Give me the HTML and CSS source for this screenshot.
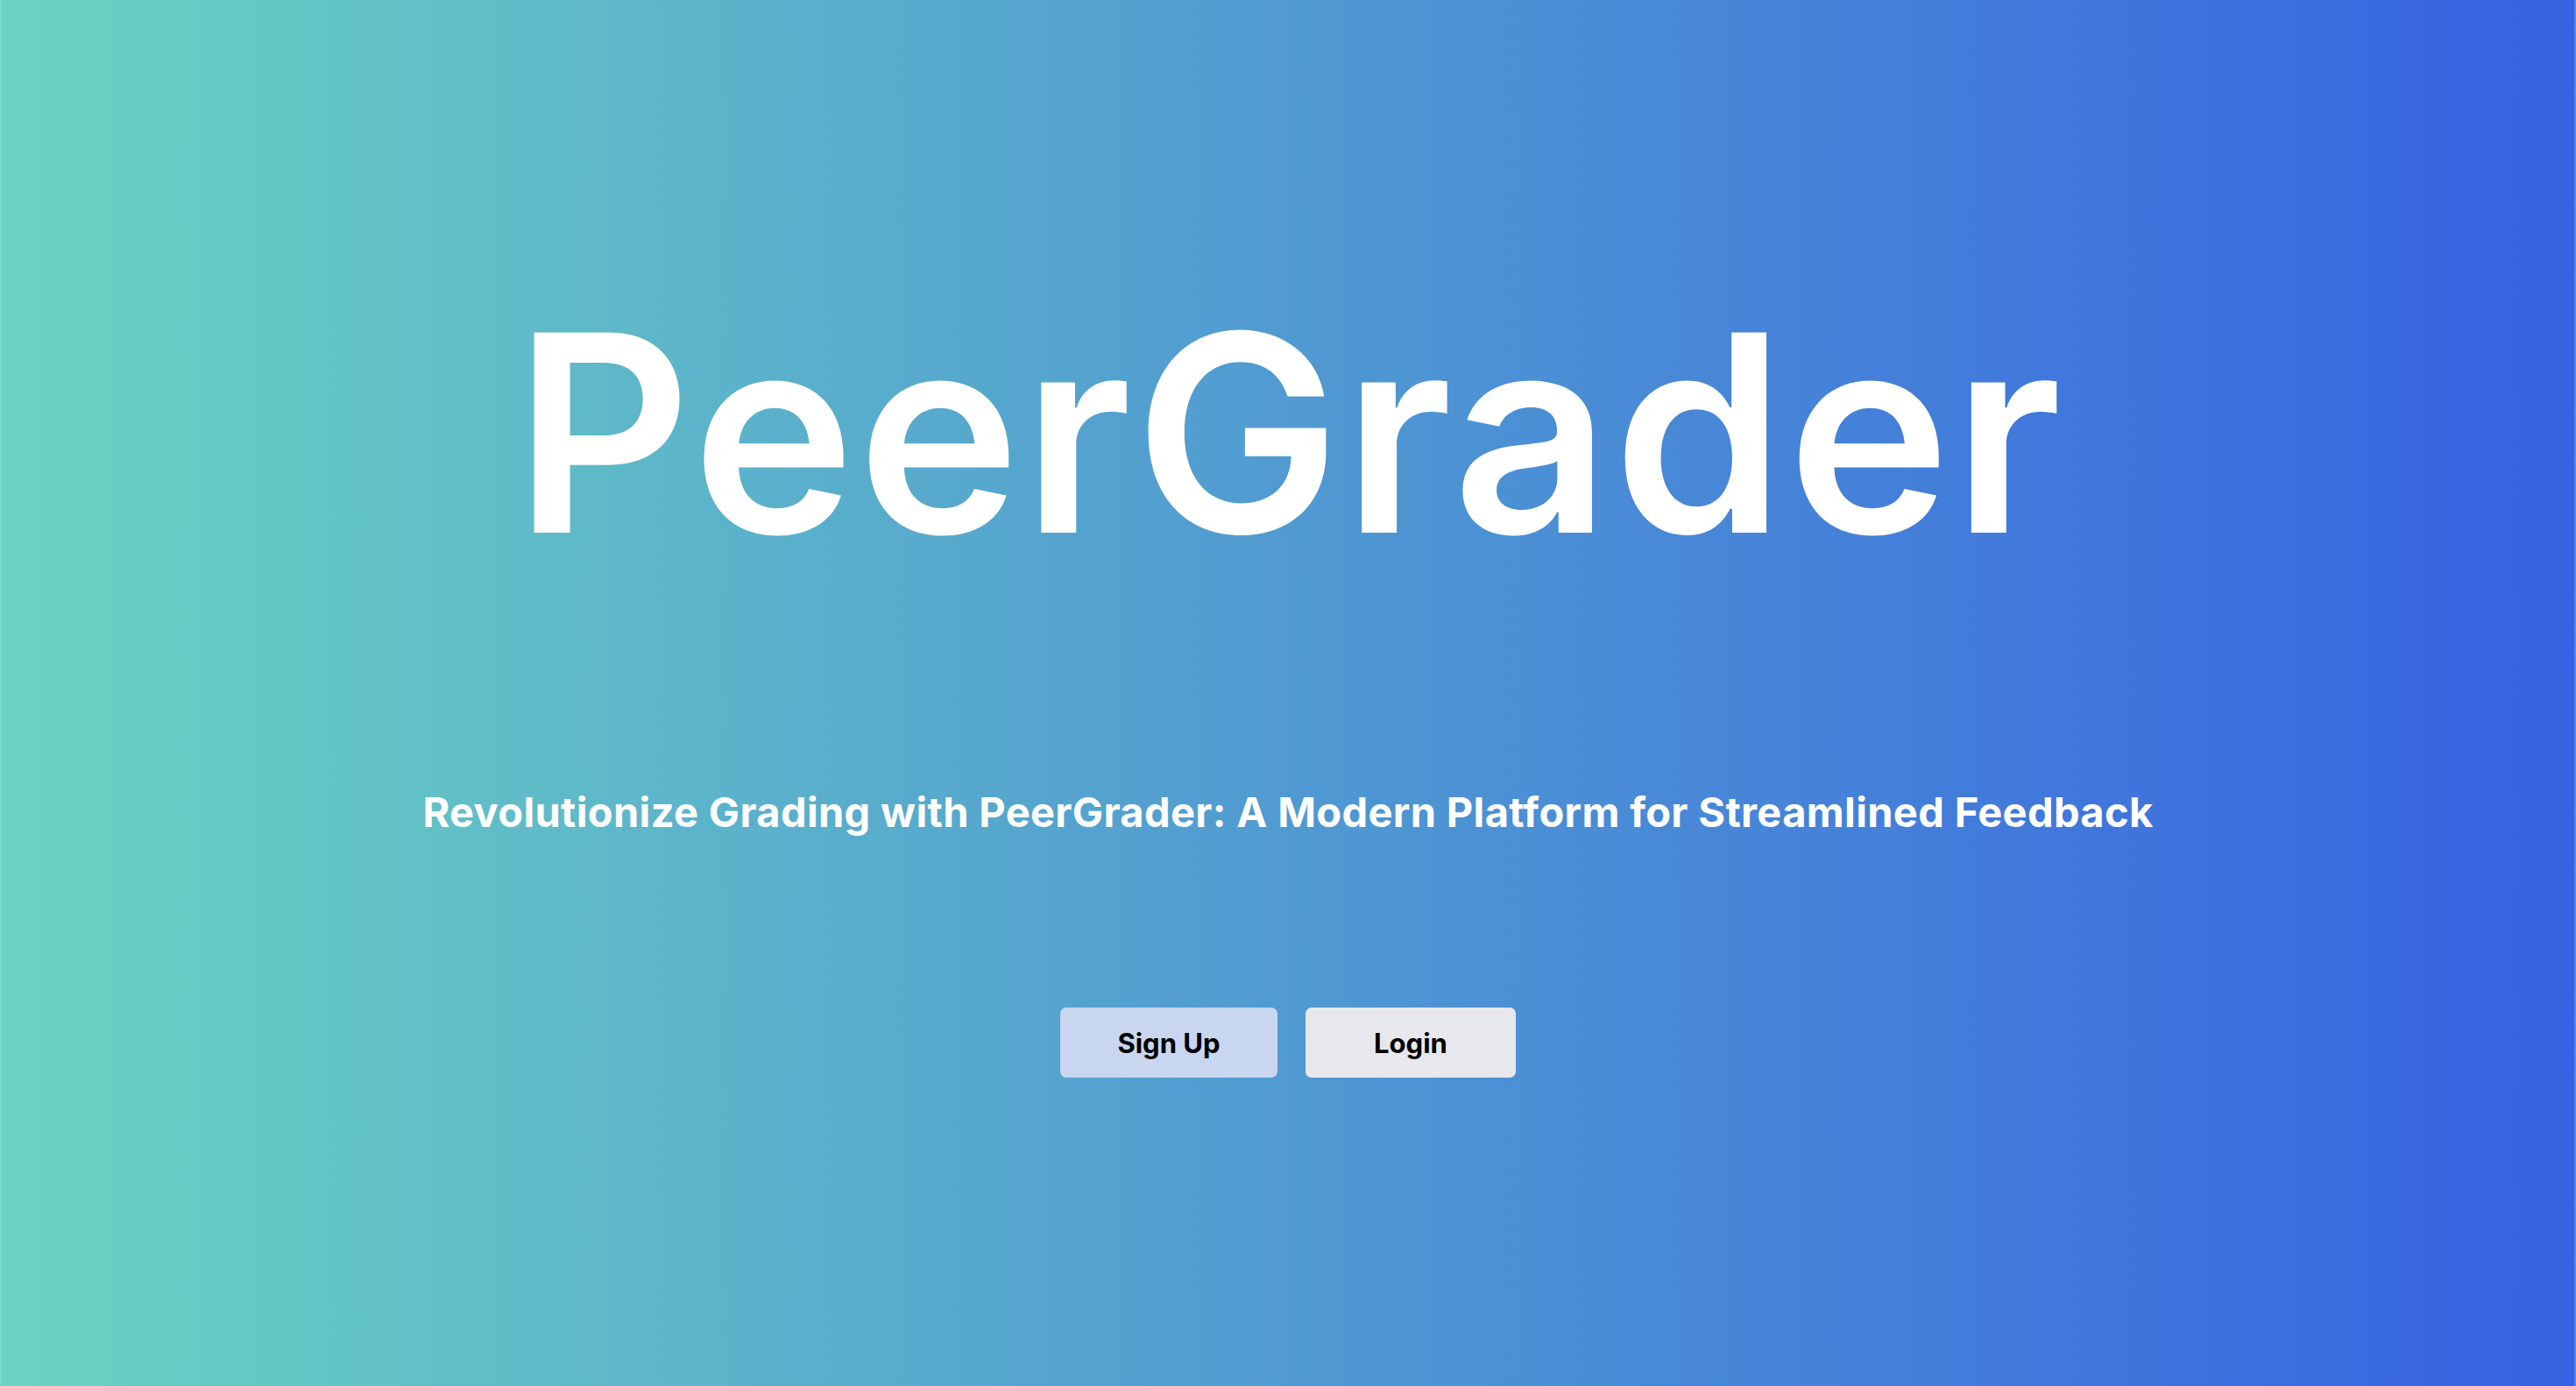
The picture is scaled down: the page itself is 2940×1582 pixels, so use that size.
FILE: index.html
```html
<!DOCTYPE html>
<html lang="en">
<head>
<meta charset="utf-8">
<title>PeerGrader</title>
<link rel="stylesheet" href="styles.css">
</head>
<body>
<main class="hero">
  <h1 class="title">PeerGrader</h1>
  <p class="tagline">Revolutionize Grading with PeerGrader: A Modern Platform for Streamlined Feedback</p>
  <div class="actions">
    <button class="btn btn-signup">Sign Up</button>
    <button class="btn btn-login">Login</button>
  </div>
</main>
</body>
</html>
```
FILE: styles.css
```css
html, body {
  margin: 0;
  padding: 0;
  height: 100%;
}
body {
  background: linear-gradient(90deg, #6ad3c1 0%, #3661e2 100%);
  font-family: Inter, "Liberation Sans", sans-serif;
  color: #ffffff;
  box-shadow: inset 2px 0 0 rgba(255,255,255,0.12), inset -2px 0 0 rgba(255,255,255,0.2);
}
.hero {
  display: flex;
  flex-direction: column;
  align-items: center;
  padding-top: 337px;
}
.title {
  margin: 0;
  font-size: 314px;
  line-height: 1;
  font-weight: 600;
  letter-spacing: 3px;
  text-indent: 3px;
}
.tagline {
  margin: 252px 0 0;
  font-size: 47px;
  line-height: 1;
  font-weight: 700;
  letter-spacing: 0.35px;
}
.actions {
  display: flex;
  gap: 32px;
  margin-top: 200px;
}
.btn {
  height: 80px;
  border: none;
  border-radius: 7px;
  font-family: Inter, "Liberation Sans", sans-serif;
  font-weight: 700;
  font-size: 31px;
  color: #000;
  padding: 0;
}
.btn-signup {
  width: 248px;
  background: #c9d6ef;
}
.btn-login {
  width: 240px;
  background: #e7e8eb;
}
```
